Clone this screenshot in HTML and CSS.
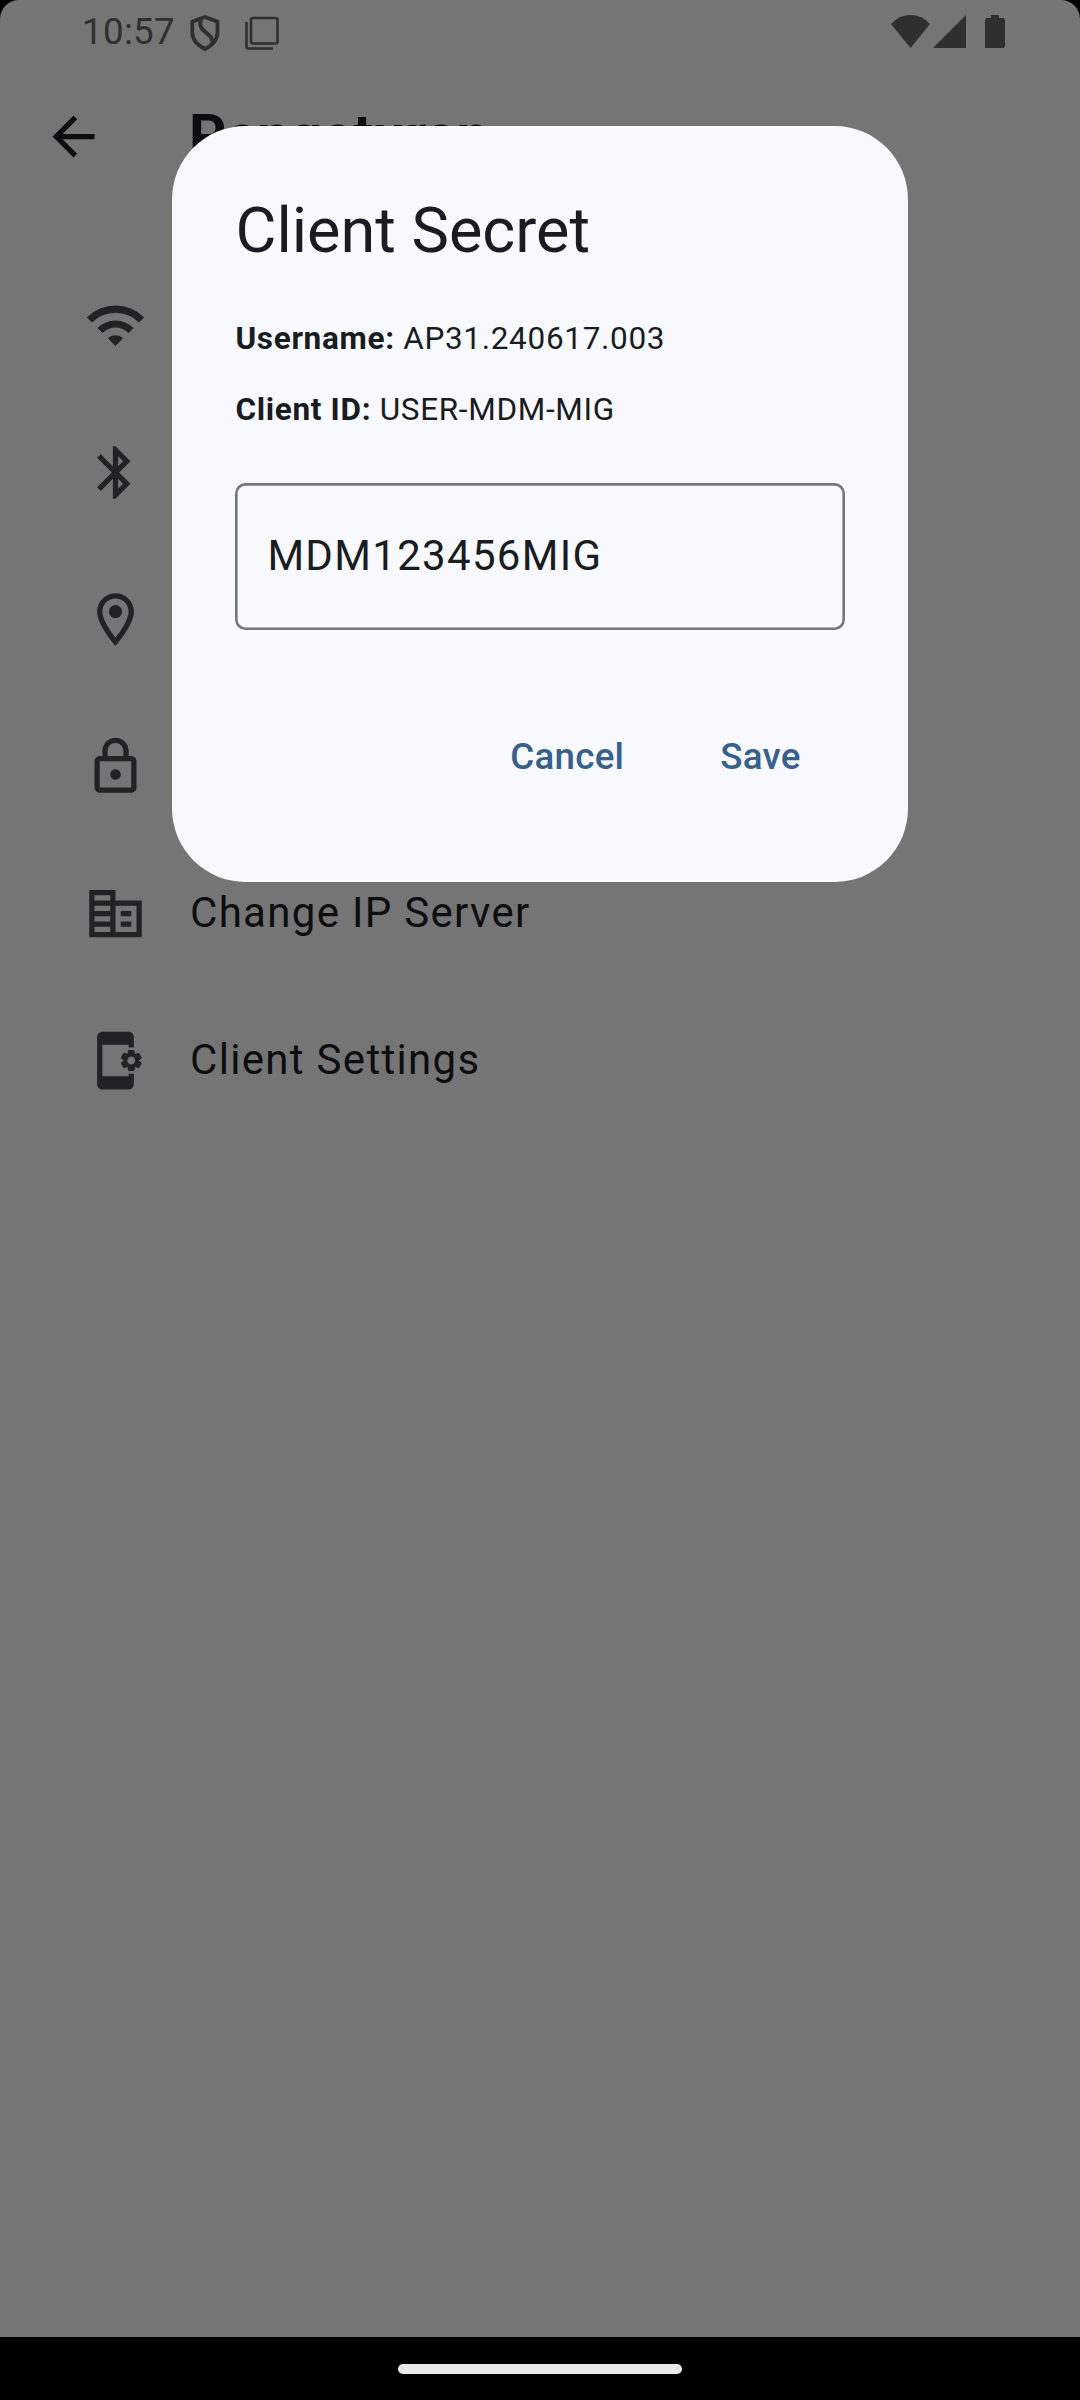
FILE: index.html
```html
<!DOCTYPE html>
<html lang="id">
<head>
<meta charset="utf-8">
<title>Pengaturan</title>
<link rel="stylesheet" href="styles.css">
</head>
<body>
<div class="device">
  <main class="screen">
    <header class="status">
      <span class="clock">10:57</span>
      <svg class="shield" viewBox="0 0 30 36"><path d="M15 2 27.500 6.600V17c0 7.500-5.500 13.500-12.500 17C8 30.500 2.300 24.500 2.300 17V6.600z" fill="none" stroke="currentColor" stroke-width="3.800" stroke-linejoin="round"/><path d="M10.800 4C7 18.500 23.500 16.500 22.500 29" fill="none" stroke="currentColor" stroke-width="4"/></svg>
      <svg class="windows" viewBox="0 0 34 34"><path d="M8 2h22.500q2 0 2 2v21.500q0 2-2 2H8q-2 0-2-2V4q0-2 2-2zM1.500 6v24.500q0 2 2 2H28" fill="none" stroke="currentColor" stroke-width="2.600"/></svg>
      <span class="spacer"></span>
      <svg class="sys-wifi" viewBox="0 0 39 33"><path d="M19.500 33 0 9Q8 0 19.500 0T39 9z"/></svg>
      <svg class="sys-signal" viewBox="0 0 33 33"><path d="M33 0v33H0z"/></svg>
      <svg class="sys-battery" viewBox="0 0 20 33"><path d="M6 0h8v3h4.500L20 4.500V31.500L18.500 33H0V4.500L1.500 3H6z"/></svg>
    </header>
    <nav class="appbar">
      <svg class="icon" viewBox="0 0 24 24"><path d="M20 11H7.830l5.590-5.590L12 4l-8 8 8 8 1.410-1.410L7.830 13H20v-2z"/></svg>
      <h1 class="heading">Pengaturan</h1>
    </nav>
    <ul class="menu">
      <li class="item"><svg class="icon" viewBox="0 0 24 24"><path d="M1.110 8.910a15.400 15.400 0 0 1 21.780 0L20.980 10.820a12.700 12.700 0 0 0-17.960 0zM5.140 12.940a9.700 9.700 0 0 1 13.720 0L16.950 14.850a7 7 0 0 0-9.900 0zM9.100 16.900a4.100 4.100 0 0 1 5.800 0L12 19.800z"/></svg></li>
      <li class="item"><svg class="icon" viewBox="0 0 24 24"><path d="M17.710 7.710 12 2h-1v7.590L6.410 5 5 6.410 10.590 12 5 17.590 6.410 19 11 14.410V22h1l5.710-5.710-4.300-4.290 4.300-4.290zM13 5.830l1.880 1.880L13 9.590V5.830zm1.880 10.460L13 18.170v-3.760l1.880 1.880z"/></svg></li>
      <li class="item"><svg class="icon" viewBox="0 0 24 24"><path d="M12 2C8.130 2 5 5.130 5 9c0 5.250 7 13 7 13s7-7.750 7-13c0-3.870-3.130-7-7-7zM7 9c0-2.760 2.240-5 5-5s5 2.240 5 5c0 2.880-2.880 7.190-5 9.880C9.920 16.210 7 11.850 7 9z"/><circle cx="12" cy="9" r="2.500"/></svg></li>
      <li class="item"><svg class="icon" viewBox="0 0 24 24"><path d="M18 8h-1V6c0-2.760-2.240-5-5-5S7 3.240 7 6v2H6c-1.100 0-2 .9-2 2v10c0 1.100.9 2 2 2h12c1.100 0 2-.9 2-2V10c0-1.100-.9-2-2-2zM9 6c0-1.660 1.340-3 3-3s3 1.340 3 3v2H9V6zm9 14H6V10h12v10zm-6-3c1.100 0 2-.9 2-2s-.9-2-2-2-2 .9-2 2 .9 2 2 2z"/></svg></li>
      <li class="item"><svg class="icon" viewBox="0 0 24 24"><path d="M12 7V3H2v18h20V7H12zM10 19H4v-2h6v2zm0-4H4v-2h6v2zm0-4H4V9h6v2zm0-4H4V5h6v2zm10 12h-8V9h8v10zm-2-8h-4v2h4v-2zm0 4h-4v2h4v-2z"/></svg><span class="label">Change IP Server</span></li>
      <li class="item"><svg class="icon" viewBox="0 0 24 24"><path d="M21.810 12.740l-.82-.63v-.22l.8-.63c.16-.12.2-.34.1-.51l-.85-1.480c-.07-.13-.21-.2-.35-.2-.05 0-.1.010-.15.030l-.95.380c-.08-.05-.11-.07-.19-.11l-.15-1.010c-.03-.21-.2-.36-.4-.36h-1.710c-.2 0-.37.150-.4.340l-.14 1.010c-.03.020-.07.030-.1.050l-.09.060-.95-.38c-.05-.02-.1-.03-.15-.03-.14 0-.27.070-.35.200l-.85 1.480c-.1.170-.06.390.1.510l.8.630v.230l-.8.630c-.16.120-.2.340-.1.510l.85 1.480c.07.130.21.200.35.200.05 0 .1-.01.15-.03l.95-.37c.08.050.12.070.2.110l.15 1.010c.03.200.2.340.4.340h1.710c.2 0 .37-.15.4-.34l.15-1.010c.03-.02.07-.03.1-.05l.09-.06.95.380c.05.020.1.030.15.030.14 0 .27-.07.35-.2l.85-1.480c.1-.17.06-.39-.1-.51zM18 13.500c-.83 0-1.500-.67-1.500-1.500s.67-1.500 1.500-1.500 1.500.67 1.500 1.500-.67 1.500-1.500 1.500zM17 17h2v4c0 1.100-.9 2-2 2H7c-1.100 0-2-.9-2-2V3c0-1.100.9-2 2-2h10c1.100 0 2 .9 2 2v4h-2V6H7v12h10v-1z"/></svg><span class="label">Client Settings</span></li>
    </ul>
  </main>
  <footer class="navbar"><div class="handle"></div></footer>
  <section class="dialog" role="dialog">
    <h2 class="title">Client Secret</h2>
    <p class="info"><b>Username:</b> AP31.240617.003</p>
    <p class="info"><b>Client ID:</b> USER-MDM-MIG</p>
    <div class="field">MDM123456MIG</div>
    <div class="actions"><button class="action">Cancel</button><button class="action">Save</button></div>
  </section>
</div>
</body>
</html>
```
FILE: styles.css
```css
* { box-sizing: border-box; margin: 0; padding: 0; }
body { background: #000; font-family: Roboto, sans-serif; }
svg { display: block; flex: none; fill: currentColor; }

.device { position: relative; width: 1080px; height: 2400px; display: flex; flex-direction: column; background: #000; }
.screen { flex: 1; background: #757575; border-radius: 19px 19px 0 0; color: #0c0d0f; }

.status { height: 63px; padding: 0 75px 0 82px; display: flex; align-items: center; color: #2f2f2f; }
.clock { width: 108px; font-size: 36.75px; line-height: 63px; letter-spacing: 0.3px; white-space: nowrap; }
.shield { width: 30px; height: 36px; margin-top: 2px; }
.windows { width: 34px; height: 34px; margin-left: 25px; margin-top: 2px; overflow: visible; }
.spacer { flex: 1; }
.sys-wifi { width: 39px; height: 33px; }
.sys-signal { width: 33px; height: 33px; margin-left: 3px; }
.sys-battery { width: 20px; height: 33px; margin-left: 19px; }

.appbar { height: 147px; padding-left: 42px; display: flex; align-items: center; gap: 84px; }
.icon { width: 63px; height: 63px; }
.heading { font-size: 57.75px; font-weight: 700; line-height: 74px; padding-bottom: 4px; }

.menu { list-style: none; padding-top: 42px; }
.item { height: 147px; padding-left: 84px; display: flex; align-items: center; gap: 43px; font-size: 42px; letter-spacing: 1.3125px; }
.item .icon { color: #202226; }
.label { padding-bottom: 2px; }

.navbar { height: 63px; background: #000; display: flex; align-items: center; justify-content: center; }
.handle { width: 284px; height: 10px; border-radius: 5px; background: #ebebeb; }

.dialog { position: absolute; left: 172.4px; top: 126px; width: 735.4px; height: 756px; padding: 63px; border-radius: 73.5px; background: #f8f9ff; color: #191c20; }
.title { font-size: 63px; font-weight: 400; line-height: 84px; margin-bottom: 45px; }
.info { font-size: 31.5px; line-height: 42px; letter-spacing: 0.68px; margin-bottom: 29px; white-space: nowrap; }
.field { height: 147px; margin-top: 52px; padding-left: 32px; box-shadow: inset 0 0 0 2.625px #73777f; border-radius: 10.5px; font-size: 42px; line-height: 146px; letter-spacing: 1.3125px; }
.actions { display: flex; justify-content: flex-end; gap: 32px; margin-top: 64px; padding-right: 12px; }
.action { border: 0; background: none; height: 126px; padding: 0 32px; font: 500 36.75px/126px Roboto, sans-serif; letter-spacing: 0.2625px; color: #36618e; }
```
